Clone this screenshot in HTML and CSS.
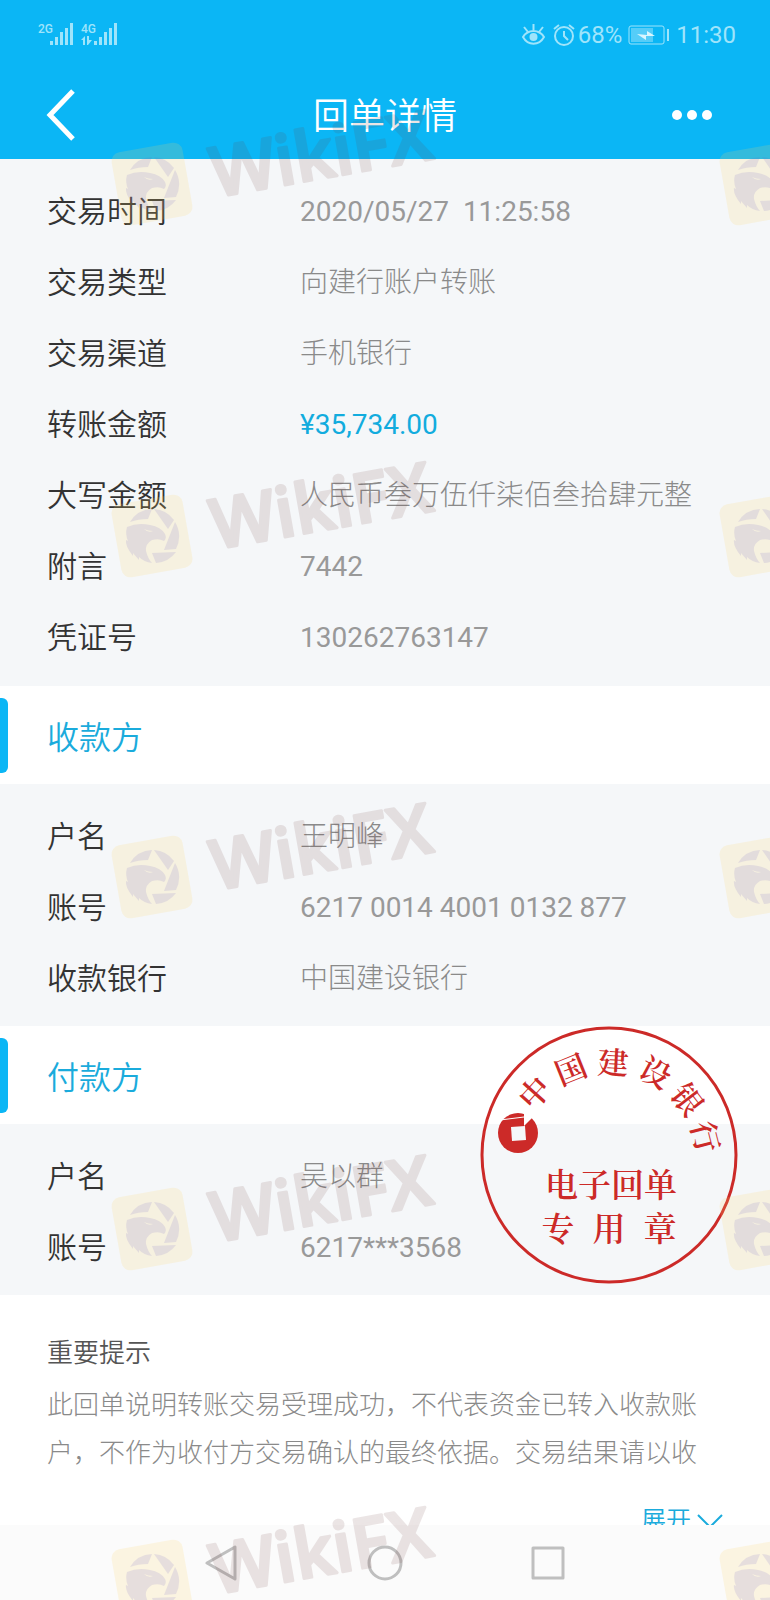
FILE: index.html
```html
<!DOCTYPE html>
<html lang="zh-CN">
<head>
    <meta charset="UTF-8">
    <meta name="viewport" content="width=device-width, initial-scale=1.0">
    <title>回单详情</title>
    <link rel="stylesheet" href="styles.css">
</head>
<body>

    <header class="header">
        <div class="status-bar">
            <svg class="signal" width="82" height="26" viewBox="0 0 82 26" fill="currentColor">
                <text x="0" y="11" class="signal-text">2G</text>
                <path d="M12 19h3v4h-3zM17 15h3v8h-3zM22 10h3v13h-3zM27 6h3v17h-3zM32 1h3v22h-3z"/>
                <text x="43" y="11" class="signal-text">4G</text>
                <path d="M43 18l4-4v9h-2v-5zM49 14h2v4h3l-4 5h-1z"/>
                <path d="M56 19h3v4h-3zM61 15h3v8h-3zM66 10h3v13h-3zM71 6h3v17h-3zM76 1h3v22h-3z"/>
            </svg>
            <div class="status-right">
                <svg width="25" height="24" viewBox="0 0 25 24" fill="none" stroke="currentColor" stroke-width="2">
                    <path d="M2 14C7 6 18 6 23 14C18 23 7 23 2 14Z"/>
                    <path d="M12.500 1v6M3 4l4 5M22 4l-4 5"/>
                    <circle cx="12.500" cy="14" r="4" fill="currentColor" stroke="none"/>
                </svg>
                <svg class="alarm" width="24" height="24" viewBox="0 0 24 24" fill="none" stroke="currentColor" stroke-width="2">
                    <circle cx="12" cy="13" r="9"/>
                    <path d="M12 8v5l4 4M2 6l5-4M22 6l-5-4"/>
                </svg>
                <span>68%</span>
                <svg class="battery" width="42" height="22" viewBox="0 0 42 22">
                    <rect x="1" y="2" width="35" height="18" rx="2" fill="none" stroke="currentColor" stroke-width="1"/>
                    <rect x="3" y="4" width="22" height="14" fill="currentColor" opacity="0.5"/>
                    <path d="M9 10l10 1 0-4 8 5-9 0 0 4z" fill="#d8f6ff"/>
                    <rect x="39" y="5" width="2" height="12" fill="currentColor"/>
                </svg>
                <span>11:30</span>
            </div>
        </div>
        <div class="title-bar">
            <button class="icon-btn" aria-label="返回">
                <svg width="30" height="52" viewBox="0 0 30 52" fill="none" stroke="currentColor" stroke-width="5">
                    <path d="M27 2L4 26L27 50"/>
                </svg>
            </button>
            <h1>回单详情</h1>
            <button class="icon-btn more" aria-label="更多">
                <svg width="40" height="10" viewBox="0 0 40 10" fill="currentColor">
                    <circle cx="5" cy="5" r="5"/>
                    <circle cx="20" cy="5" r="5"/>
                    <circle cx="35" cy="5" r="5"/>
                </svg>
            </button>
        </div>
    </header>

    <main>
        <dl class="details summary">
            <div class="row"><dt>交易时间</dt><dd class="num">2020/05/27&nbsp; 11:25:58</dd></div>
            <div class="row"><dt>交易类型</dt><dd>向建行账户转账</dd></div>
            <div class="row"><dt>交易渠道</dt><dd>手机银行</dd></div>
            <div class="row"><dt>转账金额</dt><dd class="num amount">¥35,734.00</dd></div>
            <div class="row"><dt>大写金额</dt><dd>人民币叁万伍仟柒佰叁拾肆元整</dd></div>
            <div class="row"><dt>附言</dt><dd class="num">7442</dd></div>
            <div class="row"><dt>凭证号</dt><dd class="num">130262763147</dd></div>
        </dl>

        <section>
            <h2>收款方</h2>
            <dl class="details">
                <div class="row"><dt>户名</dt><dd>王明峰</dd></div>
                <div class="row"><dt>账号</dt><dd class="num">6217 0014 4001 0132 877</dd></div>
                <div class="row"><dt>收款银行</dt><dd>中国建设银行</dd></div>
            </dl>
        </section>

        <section class="payer">
            <h2>付款方</h2>
            <dl class="details">
                <div class="row"><dt>户名</dt><dd>吴以群</dd></div>
                <div class="row"><dt>账号</dt><dd class="num">6217***3568</dd></div>
            </dl>
            <svg class="seal" width="258" height="258" viewBox="0 0 258 258">
                <circle cx="129" cy="129" r="127" fill="none" stroke="currentColor" stroke-width="3"/>
                <g fill="currentColor" text-anchor="middle">
                    <text transform="translate(55 67) rotate(-48)" y="11">中</text>
                    <text transform="translate(91 44) rotate(-22)" y="11">国</text>
                    <text transform="translate(133 37) rotate(3)" y="11">建</text>
                    <text transform="translate(175 47) rotate(28)" y="11">设</text>
                    <text transform="translate(207 74) rotate(52)" y="11">银</text>
                    <text transform="translate(225 111) rotate(76)" y="11">行</text>
                    <text class="seal-line" x="131" y="171">电子回单</text>
                    <text class="seal-line" x="78 129 180" y="215">专用章</text>
                </g>
                <circle cx="38" cy="107" r="20" fill="currentColor"/>
                <path d="M31 101l14-1 1 14-14 1z" fill="#f5f7f9"/>
                <path d="M20 94l24-3" fill="none" stroke="#fff" stroke-width="1"/>
                <path d="M44 84v16l9-9-4-7z" fill="#fff"/>
            </svg>
        </section>

        <section class="tips">
            <h3>重要提示</h3>
            <p>此回单说明转账交易受理成功，不代表资金已转入收款账户，不作为收付方交易确认的最终依据。交易结果请以收</p>
            <button class="expand">
                展开
                <svg width="26" height="14" viewBox="0 0 26 14" fill="none" stroke="currentColor" stroke-width="2">
                    <path d="M1 1l12 12L25 1"/>
                </svg>
            </button>
        </section>
    </main>

    <nav class="nav-bar">
        <button class="icon-btn" aria-label="后退">
            <svg width="36" height="36" viewBox="0 0 36 36" fill="none" stroke="currentColor" stroke-width="3" stroke-linejoin="round">
                <path d="M31 2v32L3 18z"/>
            </svg>
        </button>
        <button class="icon-btn" aria-label="主页">
            <svg width="36" height="36" viewBox="0 0 36 36" fill="none" stroke="currentColor" stroke-width="3">
                <circle cx="18" cy="18" r="16"/>
            </svg>
        </button>
        <button class="icon-btn" aria-label="最近任务">
            <svg width="36" height="36" viewBox="0 0 36 36" fill="none" stroke="currentColor" stroke-width="3" stroke-linejoin="round">
                <path d="M3 3h30v30H3z"/>
            </svg>
        </button>
    </nav>

    <svg class="watermark" aria-hidden="true">
        <defs>
            <g id="logo">
                <rect x="-36" y="-37" width="72" height="74" rx="9" fill="#ffd766" opacity="0.17"/>
                <g fill="#7060c8" opacity="0.14" transform="rotate(10)">
                    <path d="M-22-14A27 27 0 0 1 0-27L-4-17Q-14-17-22-14Z"/>
                    <path d="M2-27A27 27 0 0 1 22-16L16-7Z"/>
                    <path d="M23-14A27 27 0 0 1 24 13L12 14Z"/>
                    <path d="M0 17L24 16A27 27 0 0 1 4 27Z"/>
                    <path fill-rule="evenodd" d="M-25-9Q-14-14-2-11Q9-9 13-2Q15 2 12 5Q7 2 0 4Q-7 8-6 15Q-4 23 0 27Q-8 26-13 21L-13 24L-19 17L-19 20Q-27 10-26 4L-24 5Q-27-2-25-9ZM-8-7Q-4-3 1-5Q-4-5-8-7Z"/>
                </g>
            </g>
            <g id="mark">
                <use href="#logo"/>
                <text x="60" y="24" class="mark-text">WikiFX</text>
            </g>
        </defs>
        <use href="#mark" transform="translate(152 184) rotate(-10)"/>
        <use href="#mark" transform="translate(152 536) rotate(-10)"/>
        <use href="#mark" transform="translate(152 877) rotate(-10)"/>
        <use href="#mark" transform="translate(152 1229) rotate(-10)"/>
        <use href="#mark" transform="translate(152 1581) rotate(-10)"/>
        <use href="#logo" transform="translate(760 184) rotate(-10)"/>
        <use href="#logo" transform="translate(760 536) rotate(-10)"/>
        <use href="#logo" transform="translate(760 877) rotate(-10)"/>
        <use href="#logo" transform="translate(760 1229) rotate(-10)"/>
        <use href="#logo" transform="translate(760 1581) rotate(-10)"/>
    </svg>

</body>
</html>
```
FILE: styles.css
```css
* {
    box-sizing: border-box;
}

body {
    margin: 0;
    position: relative;
    min-height: 100vh;
    overflow-x: hidden;
    display: flex;
    flex-direction: column;
    background-color: #fff;
    color: #333;
    font-family: Roboto, "Noto Sans CJK SC", sans-serif;
}

h1, h2, h3, p, dl, dd {
    margin: 0;
    font-weight: 350;
}

button {
    padding: 0;
    border: none;
    background: none;
    color: inherit;
    font: inherit;
    cursor: pointer;
}

svg {
    display: block;
}

/* header */
.header {
    background-color: #0bb6f5;
    color: #fff;
}

.status-bar {
    display: flex;
    justify-content: space-between;
    align-items: center;
    height: 70px;
    padding: 0 34px 0 38px;
    color: #9fe4fb;
    font-size: 24px;
}

.signal-text {
    font-size: 12px;
    font-weight: 500;
}

.status-right {
    display: flex;
    align-items: center;
    gap: 6px;
}

.status-right .alarm {
    margin-right: -4px;
}

.status-right span {
    line-height: 30px;
}

.title-bar {
    display: grid;
    grid-template-columns: 1fr auto 1fr;
    align-items: center;
    height: 89px;
    padding: 0 46px;
}

.title-bar h1 {
    padding-top: 4px;
    font-size: 36px;
    line-height: 48px;
}

.title-bar .more {
    justify-self: end;
    padding-right: 12px;
}

/* detail rows */
.details {
    padding: 17px 47px 12px;
    background-color: #f5f7f9;
}

.summary {
    padding-bottom: 13px;
}

.row {
    display: flex;
    align-items: center;
    height: 71px;
    line-height: 40px;
}

.row dt {
    width: 253px;
    font-size: 30px;
    font-weight: 350;
}

.row dd {
    color: #8a8a8a;
    font-size: 28px;
    font-weight: 300;
}

.row .num {
    color: #999;
    font-weight: 400;
}

.row .amount {
    color: #12acde;
}

h2 {
    display: flex;
    align-items: center;
    height: 98px;
    color: #1aabdc;
    font-size: 32px;
}

h2::before {
    content: "";
    width: 8px;
    height: 75px;
    margin-right: 39px;
    border-radius: 0 6px 6px 0;
    background-color: #0bb6f5;
}

/* seal printed over the payer block */
.payer {
    position: relative;
}

.seal {
    position: absolute;
    top: 0;
    right: 32px;
    color: #cc2a28;
    font-family: "Noto Serif CJK SC", "Noto Sans CJK SC", serif;
    font-size: 31px;
    font-weight: 600;
}

.seal-line {
    font-size: 33px;
}

/* tips */
.tips {
    display: flex;
    flex-direction: column;
    height: 230px;
    padding: 38px 47px 0;
    overflow: hidden;
}

.tips h3 {
    color: #555;
    font-size: 26px;
    line-height: 40px;
}

.tips p {
    margin-top: 8px;
    color: #8a8a8a;
    font-size: 26px;
    font-weight: 300;
    line-height: 48px;
}

.expand {
    display: flex;
    align-items: center;
    align-self: flex-end;
    gap: 6px;
    margin-top: 24px;
    color: #1aabdc;
    font-size: 25px;
    font-weight: 350;
    line-height: 40px;
}

/* system navigation */
.nav-bar {
    display: flex;
    justify-content: center;
    align-items: center;
    gap: 127px;
    height: 75px;
    background-color: #fbfbfb;
    color: #bfbfbf;
}

.watermark {
    position: absolute;
    top: 0;
    left: 0;
    width: 100%;
    height: 100%;
    overflow: hidden;
    pointer-events: none;
}

.mark-text {
    fill: #6e3c3c;
    stroke: #6e3c3c;
    stroke-width: 3px;
    stroke-linejoin: round;
    opacity: 0.13;
    font-family: "Open Sans", sans-serif;
    font-size: 69px;
    font-weight: 600;
}
```
